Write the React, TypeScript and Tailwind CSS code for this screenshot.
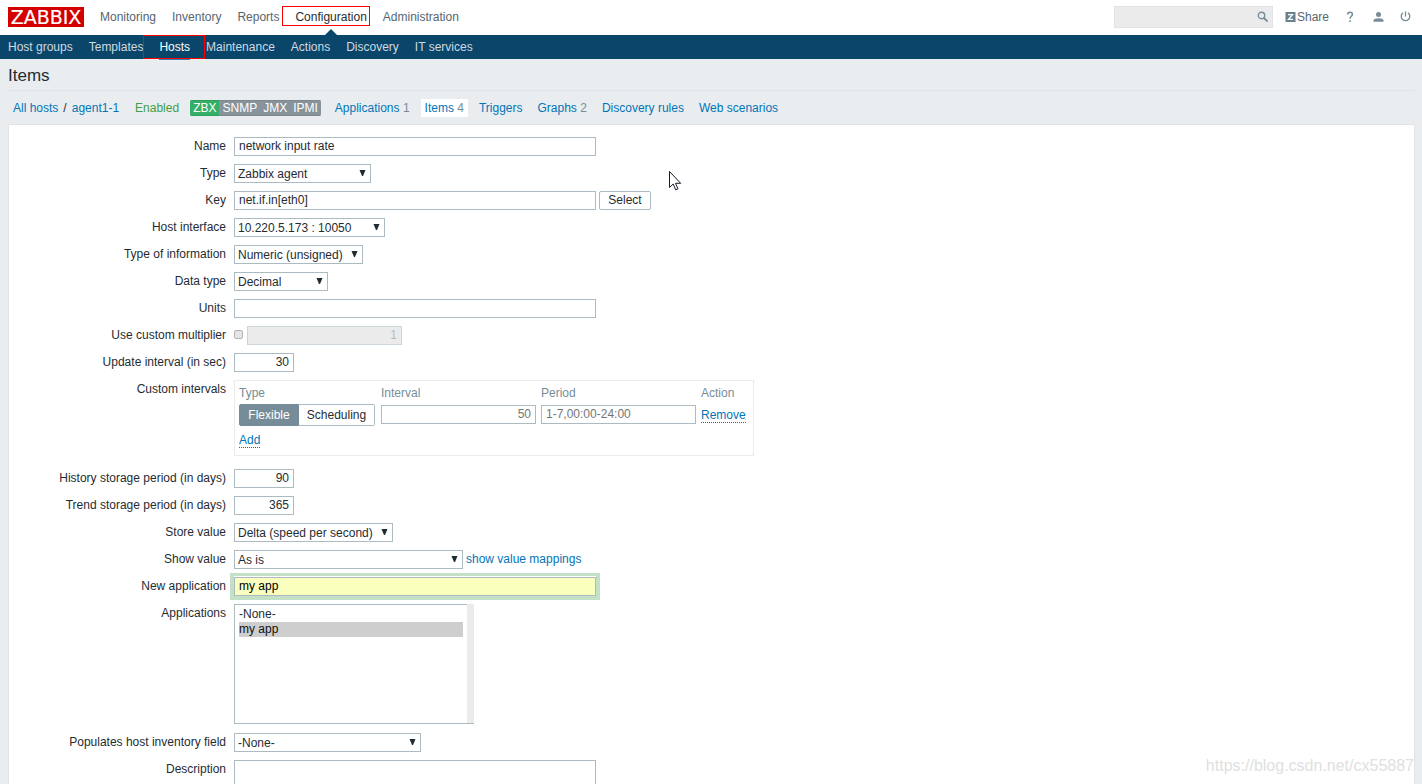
import type { ReactNode } from 'react'

const mainMenu = ['Monitoring', 'Inventory', 'Reports', 'Configuration', 'Administration']
const subMenu = ['Host groups', 'Templates', 'Hosts', 'Maintenance', 'Actions', 'Discovery', 'IT services']
const agents = ['ZBX', 'SNMP', 'JMX', 'IPMI']

const hostLinks = [
  { label: 'Applications', count: 1 },
  { label: 'Items', count: 4, active: true },
  { label: 'Triggers' },
  { label: 'Graphs', count: 2 },
  { label: 'Discovery rules' },
  { label: 'Web scenarios' },
]

const field =
  'block h-[19px] border border-[#acbbc2] bg-white px-1 pb-[2px] leading-[15px] text-[#1f2c33] outline-none'

function Row({ label, id, children }: { label: string; id?: string; children: ReactNode }) {
  return (
    <div className="mb-2 flex gap-2">
      <label htmlFor={id} className="w-[217px] shrink-0 text-right leading-[18px]">
        {label}
      </label>
      <div className="flex items-start">{children}</div>
    </div>
  )
}

function Select({ id, value, width }: { id: string; value: string; width: string }) {
  return (
    <div className={`relative ${width}`}>
      <select
        id={id}
        className="block h-[19px] w-full appearance-none border border-[#acbbc2] bg-white px-[3px] text-[#1f2c33] outline-none"
      >
        <option>{value}</option>
      </select>
      <svg
        className="pointer-events-none absolute top-[6px] right-[5px]"
        width="7"
        height="6"
        viewBox="0 0 7 6"
        fill="#1f2c33"
      >
        <path d="M.5 0h6L4 6H3z" />
      </svg>
    </div>
  )
}

function TopBar() {
  return (
    <header className="flex h-[35px] shrink-0 items-center bg-white px-2 pb-[2px]">
      <a href="#" aria-label="Zabbix" className="mr-4">
        <svg width="76" height="20" viewBox="0 0 76 20" className="block">
          <rect width="76" height="20" fill="#d40000" />
          <text
            x="38"
            y="17"
            textAnchor="middle"
            fill="#fff"
            stroke="#fff"
            strokeWidth="0.2"
            fontSize="19"
            fontFamily="DejaVu Sans, sans-serif"
          >
            ZABBIX
          </text>
        </svg>
      </a>
      <nav className="flex h-full gap-4 text-[#566670]">
        {mainMenu.map((name) =>
          name === 'Configuration' ? (
            <a key={name} href="#" className="relative flex items-center text-[#1f2c33]">
              {name}
              <span className="absolute top-[6px] -right-[3px] -left-[13px] h-5 border border-[#f00]" />
              <svg className="absolute -bottom-[2px] left-[30px]" width="12" height="6" viewBox="0 0 12 6">
                <path d="M6 0l6 6H0z" fill="#0a466a" />
              </svg>
            </a>
          ) : (
            <a key={name} href="#" className="flex items-center">
              {name}
            </a>
          )
        )}
      </nav>
      <div className="ml-auto flex items-center text-[#768d99]">
        <div className="flex h-[22px] w-[159px] items-center border border-[#e0e4e6] bg-[#ebebeb] pr-[3px]">
          <input aria-label="Search" className="h-full min-w-0 flex-1 bg-transparent px-1 outline-none" />
          <button aria-label="Search">
            <svg width="12" height="12" viewBox="0 0 12 12" fill="none" stroke="#768d99">
              <circle cx="4.5" cy="4.5" r="3.2" strokeWidth="1.4" />
              <path d="M7 7l3.6 3.6" strokeWidth="1.8" />
            </svg>
          </button>
        </div>
        <a href="#" className="ml-3 flex items-center gap-px text-[#566670]">
          <svg width="11" height="10" viewBox="0 0 11 10">
            <rect x=".5" width="10" height="10" fill="#69808d" />
            <path d="M3 2.700h4.500L3.500 7.300h4.500" fill="none" stroke="#fff" strokeWidth="1.300" />
          </svg>
          Share
        </a>
        <a href="#" aria-label="Help" className="ml-[17px]">
          <svg width="8" height="12" viewBox="0 0 8 12" fill="none" stroke="#768d99" strokeWidth="1.5">
            <path d="M1.6 3.6C1.6 2 2.6 1.3 4 1.3s2.4.8 2.4 2.1C6.4 5.2 4 5.400 4 7.800" />
            <path d="M4 9.300v1.700" />
          </svg>
        </a>
        <a href="#" aria-label="Profile" className="ml-[19px]">
          <svg width="11" height="10" viewBox="0 0 11 10" fill="#768d99">
            <circle cx="5.500" cy="2.600" r="2.500" />
            <path d="M.5 9.800V8.500C.5 7 3 6.300 5.500 6.300s5 .7 5 2.200v1.300z" />
          </svg>
        </a>
        <a href="#" aria-label="Sign out" className="mr-[3px] ml-4">
          <svg width="11" height="11" viewBox="0 0 11 11" fill="none" stroke="#768d99" strokeWidth="1.300">
            <path d="M5.500.5v5M3 1.900a4.300 4.300 0 1 0 5 0" />
          </svg>
        </a>
      </div>
    </header>
  )
}

function SubBar() {
  return (
    <nav className="flex h-6 shrink-0 gap-4 bg-[#0a466a] px-2 text-[#cfdae1]">
      {subMenu.map((name) =>
        name === 'Hosts' ? (
          <a key={name} href="#" className="relative flex items-center text-white">
            {name}
            <span className="absolute inset-x-0 top-6 h-px bg-[#3d7fae]" />
            <span className="absolute top-0 -right-[15px] -left-4 h-6 border border-[#f00]" />
          </a>
        ) : (
          <a key={name} href="#" className="flex items-center">
            {name}
          </a>
        )
      )}
    </nav>
  )
}

function HostBar() {
  return (
    <div className="flex h-[33px] shrink-0 items-center pl-[5px] text-[#0275b8]">
      <a href="#">All hosts</a>
      <span className="mx-[5px] text-[#1f2c33]">/</span>
      <a href="#">agent1-1</a>
      <span className="mr-[11px] ml-4 text-[#429e47]">Enabled</span>
      <div className="mr-[10px] flex overflow-hidden rounded-xs text-white">
        {agents.map((name) => (
          <span
            key={name}
            className={`h-4 border-y px-[3px] leading-[14px] ${
              name === 'ZBX' ? 'border-[#2f9f5e] bg-[#34af67]' : 'border-[#7d878d] bg-[#88949b]'
            }`}
          >
            {name}
          </span>
        ))}
      </div>
      <div className="flex gap-[7px]">
        {hostLinks.map(({ label, count, active }) => (
          <a key={label} href="#" className={`h-[18px] px-1 leading-[18px] ${active ? 'bg-white' : ''}`}>
            {label}
            {count && <span className="text-[#768d99]"> {count}</span>}
          </a>
        ))}
      </div>
    </div>
  )
}

function CustomIntervals() {
  return (
    <div className="mb-[5px] h-[76px] w-[520px] border border-[#ebebeb] px-1 pt-1">
      <table className="w-full table-fixed">
        <thead>
          <tr className="h-[17px] text-left leading-4 text-[#768d99]">
            <th className="w-[142px] pb-px font-normal">Type</th>
            <th className="w-40 pb-px font-normal">Interval</th>
            <th className="w-40 pb-px font-normal">Period</th>
            <th className="pb-px font-normal">Action</th>
          </tr>
        </thead>
        <tbody>
          <tr className="h-[26px]">
            <td>
              <div className="flex">
                <button
                  type="button"
                  className="h-[22px] w-[60px] rounded-l-xs border border-[#768d99] bg-[#768d99] text-white"
                >
                  Flexible
                </button>
                <button
                  type="button"
                  className="h-[22px] w-[76px] rounded-r-xs border border-l-0 border-[#acbbc2] bg-white"
                >
                  Scheduling
                </button>
              </div>
            </td>
            <td>
              <input
                aria-label="Interval"
                placeholder="50"
                className={`${field} mb-px w-[155px] text-right placeholder:text-[#757575]`}
              />
            </td>
            <td>
              <input
                aria-label="Period"
                placeholder="1-7,00:00-24:00"
                className={`${field} mb-px w-[155px] placeholder:text-[#757575]`}
              />
            </td>
            <td>
              <button
                type="button"
                className="border-b border-dotted border-[#0275b8] leading-[13px] text-[#0275b8]"
              >
                Remove
              </button>
            </td>
          </tr>
        </tbody>
      </table>
      <button
        type="button"
        className="mt-[6px] block border-b border-dotted border-[#0275b8] leading-[13px] text-[#0275b8]"
      >
        Add
      </button>
    </div>
  )
}

function ItemForm() {
  return (
    <form className="flex-1 border border-[#dfe4e7] bg-white pt-3">
      <Row label="Name" id="name">
        <input id="name" defaultValue="network input rate" className={`${field} w-[362px]`} />
      </Row>
      <Row label="Type" id="type">
        <Select id="type" value="Zabbix agent" width="w-[137px]" />
      </Row>
      <Row label="Key" id="key">
        <input id="key" defaultValue="net.if.in[eth0]" className={`${field} w-[362px]`} />
        <button type="button" className="ml-[3px] h-[19px] w-[52px] rounded-xs border border-[#acbbc2] leading-[17px]">
          Select
        </button>
      </Row>
      <Row label="Host interface" id="interface">
        <Select id="interface" value="10.220.5.173 : 10050" width="w-[151px]" />
      </Row>
      <Row label="Type of information" id="value-type">
        <Select id="value-type" value="Numeric (unsigned)" width="w-[129px]" />
      </Row>
      <Row label="Data type" id="data-type">
        <Select id="data-type" value="Decimal" width="w-[94px]" />
      </Row>
      <Row label="Units" id="units">
        <input id="units" className={`${field} w-[362px]`} />
      </Row>
      <Row label="Use custom multiplier" id="multiplier">
        <input
          id="multiplier"
          type="checkbox"
          className="mt-1 mr-1 size-[9px] appearance-none rounded-xs border border-[#b4b4b4] bg-[#e4e4e4]"
        />
        <input
          aria-label="Multiplier"
          disabled
          defaultValue="1"
          className="block h-[19px] w-[155px] border border-[#ccd5d9] bg-[#ebebeb] px-1 pb-[2px] text-right leading-[15px] text-[#b4bcc0]"
        />
      </Row>
      <Row label="Update interval (in sec)" id="delay">
        <input id="delay" defaultValue="30" className={`${field} w-[60px] text-right`} />
      </Row>
      <Row label="Custom intervals">
        <CustomIntervals />
      </Row>
      <Row label="History storage period (in days)" id="history">
        <input id="history" defaultValue="90" className={`${field} w-[60px] text-right`} />
      </Row>
      <Row label="Trend storage period (in days)" id="trends">
        <input id="trends" defaultValue="365" className={`${field} w-[60px] text-right`} />
      </Row>
      <Row label="Store value" id="store">
        <Select id="store" value="Delta (speed per second)" width="w-[159px]" />
      </Row>
      <Row label="Show value" id="show">
        <Select id="show" value="As is" width="w-[229px]" />
        <a href="#" className="ml-[3px] leading-[19px] text-[#0275b8]">
          show value mappings
        </a>
      </Row>
      <Row label="New application" id="new-app">
        <input
          id="new-app"
          defaultValue="my app"
          className="block h-[19px] w-[362px] border border-[#acbbc2] bg-[#faffbd] px-1 pb-[2px] leading-[15px] text-black shadow-[0_-1px_0_#fff,0_0_0_4px_#c4e1c8] outline-none"
        />
      </Row>
      <Row label="Applications" id="apps">
        <select
          id="apps"
          multiple
          defaultValue={['my app']}
          className="block h-[120px] w-[233px] overflow-hidden border border-r-0 border-[#acbbc2] bg-white px-1 pt-[2px] outline-none"
        >
          <option className="h-[15px] p-0 leading-[15px]">-None-</option>
          <option className="h-[15px] p-0 leading-[15px]">my app</option>
        </select>
        <div className="mb-px h-[120px] w-[7px] border-b border-[#acbbc2] bg-[#ebebeb]" />
      </Row>
      <Row label="Populates host inventory field" id="inventory">
        <Select id="inventory" value="-None-" width="w-[187px]" />
      </Row>
      <Row label="Description" id="description">
        <textarea
          id="description"
          rows={7}
          className="block w-[362px] resize-none border border-[#acbbc2] px-1 outline-none"
        />
      </Row>
    </form>
  )
}

export default function App() {
  return (
    <div className="relative flex h-screen flex-col overflow-hidden bg-[#e9edf0] font-['Liberation_Sans',Arial,sans-serif] text-[12px] leading-[18px] text-[#1f2c33]">
      <TopBar />
      <SubBar />
      <main className="mr-[7px] ml-2 flex flex-1 flex-col">
        <h1 className="h-8 shrink-0 border-b border-[#dfe4e7] text-[17px] leading-[34px]">Items</h1>
        <HostBar />
        <ItemForm />
      </main>

      {/* mouse pointer */}
      <svg className="absolute top-[171px] left-[669px]" width="13" height="20" viewBox="0 0 13 20">
        <path
          d="M.5.500v16l3.700-3.500 2.500 5.800 2.300-1-2.500-5.500h5.200z"
          fill="#fff"
          stroke="#1a1a2a"
        />
      </svg>
      <span className="absolute right-2 bottom-2 text-[16px] leading-5 text-[#e0e0e0]">
        https://blog.csdn.net/cx55887
      </span>
    </div>
  )
}
